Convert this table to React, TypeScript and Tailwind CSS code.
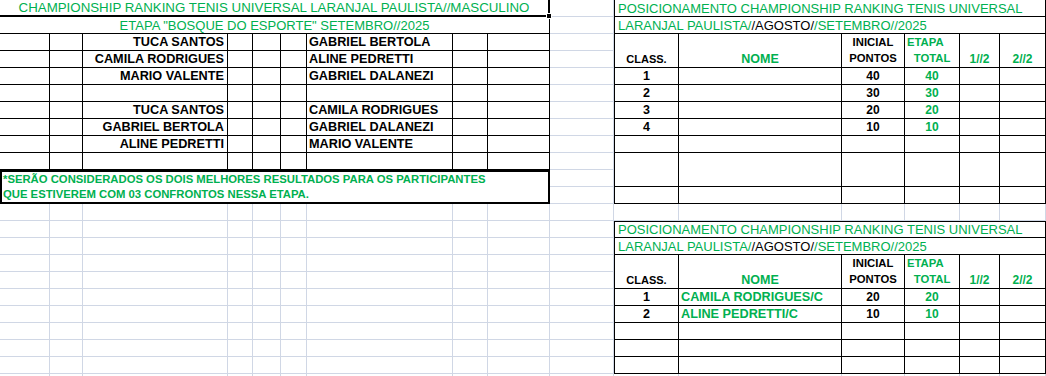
import React from 'react';

const LEFT_COLS = 'grid grid-cols-[50px_33px_145px_25px_28px_26px_146px_35px_62px]';
const RIGHT_COLS = 'grid grid-cols-[65px_163px_63px_55px_40px_46px]';

const matches = [
  ['TUCA SANTOS', 'GABRIEL BERTOLA'],
  ['CAMILA RODRIGUES', 'ALINE PEDRETTI'],
  ['MARIO VALENTE', 'GABRIEL DALANEZI'],
  ['', ''],
  ['TUCA SANTOS', 'CAMILA RODRIGUES'],
  ['GABRIEL BERTOLA', 'GABRIEL DALANEZI'],
  ['ALINE PEDRETTI', 'MARIO VALENTE'],
  ['', ''],
];

type Rank = { pos: string; name: string; pts: string };

const ranking1: Rank[] = [
  { pos: '1', name: '', pts: '40' },
  { pos: '2', name: '', pts: '30' },
  { pos: '3', name: '', pts: '20' },
  { pos: '4', name: '', pts: '10' },
];

const ranking2: Rank[] = [
  { pos: '1', name: 'CAMILA RODRIGUES/C', pts: '20' },
  { pos: '2', name: 'ALINE PEDRETTI/C', pts: '10' },
];

function SheetGrid() {
  // faint excel gridlines behind everything
  return (
    <div className="col-start-1 row-start-1 grid grid-cols-[50px_33px_145px_25px_28px_26px_146px_35px_62px_64px_65px_163px_63px_55px_40px_46px] auto-rows-[17px]">
      {Array.from({ length: 23 * 16 }).map((_, i) => (
        <div key={i} className="border-r border-b border-[#d0d7e5]" />
      ))}
    </div>
  );
}

function MatchRow({ left, right }: { left: string; right: string }) {
  return (
    <div className={`${LEFT_COLS} h-[17px]`}>
      <div className="border-r border-b border-black bg-white" />
      <div className="border-r border-b border-black bg-white" />
      <div className="border-r border-b border-black bg-white flex items-center justify-end pr-[3px] text-[12.7px] font-bold leading-none text-black whitespace-nowrap">
        {left}
      </div>
      <div className="border-r border-b border-black bg-white" />
      <div className="border-r border-b border-black bg-white" />
      <div className="border-r border-b border-black bg-white" />
      <div className="border-r border-b border-black bg-white flex items-center pl-[2px] text-[12.7px] font-bold leading-none text-black whitespace-nowrap">
        {right}
      </div>
      <div className="border-r border-b border-black bg-white" />
      <div className="border-r border-b border-black bg-white" />
    </div>
  );
}

function RCell({
  first,
  className = '',
  children,
}: {
  first?: boolean;
  className?: string;
  children?: React.ReactNode;
}) {
  return (
    <div
      className={`border-r border-b border-black bg-white flex items-center leading-none whitespace-nowrap ${
        first ? 'border-l' : ''
      } ${className}`}
    >
      {children}
    </div>
  );
}

function HeadCell({
  first,
  top,
  bottom,
  topClass = 'justify-center',
  className = '',
}: {
  first?: boolean;
  top?: React.ReactNode;
  bottom?: React.ReactNode;
  topClass?: string;
  className?: string;
}) {
  return (
    <div
      className={`border-r border-b border-black bg-white flex flex-col leading-none whitespace-nowrap font-bold ${
        first ? 'border-l' : ''
      } ${className}`}
    >
      <div className={`h-[17px] flex items-center ${topClass}`}>{top}</div>
      <div className="flex-1 flex items-center justify-center">{bottom}</div>
    </div>
  );
}

function RankingTable({ rows, topBorder }: { rows: Rank[]; topBorder?: boolean }) {
  const empties = rows.length === 4 ? 0 : 3;
  return (
    <div className="flex flex-col">
      <div
        className={`h-[17px] border-l border-r border-b border-black bg-white flex items-center pl-[3px] text-[13px] leading-none text-[#00b050] whitespace-nowrap ${
          topBorder ? 'border-t' : ''
        }`}
      >
        POSICIONAMENTO CHAMPIONSHIP RANKING TENIS UNIVERSAL
      </div>
      <div className="h-[17px] border-l border-r border-b border-black bg-white flex items-center pl-[3px] text-[13px] leading-none text-[#00b050] whitespace-nowrap">
        LARANJAL PAULISTA/<span className="text-black">/AGOSTO/</span>/SETEMBRO//2025
      </div>

      <div className={`${RIGHT_COLS} h-[34px]`}>
        <HeadCell first bottom="CLASS." className="text-[11px] text-black" />
        <HeadCell bottom="NOME" className="text-[12.5px] text-[#00b050]" />
        <HeadCell top="INICIAL" bottom="PONTOS" className="text-[11.3px] text-black" />
        <HeadCell
          top="ETAPA"
          bottom="TOTAL"
          topClass="justify-start pl-[2px]"
          className="text-[11.3px] text-[#00b050]"
        />
        <HeadCell bottom="1//2" className="text-[12px] text-[#00b050]" />
        <HeadCell bottom="2//2" className="text-[12px] text-[#00b050]" />
      </div>

      {rows.map((r) => (
        <div key={r.pos} className={`${RIGHT_COLS} h-[17px]`}>
          <RCell first className="justify-center text-[12.5px] font-bold text-black">
            {r.pos}
          </RCell>
          <RCell className="pl-[2px] text-[12.7px] font-bold text-[#00b050]">{r.name}</RCell>
          <RCell className="justify-center text-[12px] font-bold text-black">{r.pts}</RCell>
          <RCell className="justify-center text-[12px] font-bold text-[#00b050]">{r.pts}</RCell>
          <RCell />
          <RCell />
        </div>
      ))}

      {empties === 0 ? (
        <>
          <div className={`${RIGHT_COLS} h-[17px]`}>
            <RCell first /><RCell /><RCell /><RCell /><RCell /><RCell />
          </div>
          <div className={`${RIGHT_COLS} h-[34px]`}>
            <RCell first /><RCell /><RCell /><RCell /><RCell /><RCell />
          </div>
          <div className={`${RIGHT_COLS} h-[17px]`}>
            <RCell first /><RCell /><RCell /><RCell /><RCell /><RCell />
          </div>
        </>
      ) : (
        [0, 1, 2].map((i) => (
          <div key={i} className={`${RIGHT_COLS} h-[17px]`}>
            <RCell first /><RCell /><RCell /><RCell /><RCell /><RCell />
          </div>
        ))
      )}
    </div>
  );
}

export default function App() {
  return (
    <div className="w-[1046px] h-[376px] overflow-hidden bg-white grid font-['Liberation_Sans',Arial,sans-serif]">
      <SheetGrid />

      <div className="col-start-1 row-start-1 flex items-start">
        {/* left: confrontos da etapa */}
        <div className="w-[550px] flex flex-col">
          <div className="relative h-[17px] border-r-2 border-b-2 border-black bg-white flex items-center justify-center text-[13.3px] leading-none text-[#00b050] whitespace-nowrap">
            CHAMPIONSHIP RANKING TENIS UNIVERSAL LARANJAL PAULISTA//MASCULINO
            <span className="absolute -right-[4px] -bottom-[4px] w-[6px] h-[6px] bg-black border border-white" />
          </div>
          <div className="h-[17px] border-r border-b border-black bg-white flex items-center justify-center text-[13px] leading-none text-[#00b050] whitespace-nowrap">
            ETAPA "BOSQUE DO ESPORTE" SETEMBRO//2025
          </div>

          {matches.map(([l, r], i) => (
            <MatchRow key={i} left={l} right={r} />
          ))}

          <div className="h-[34px] border-2 border-black bg-white flex flex-col text-[11.3px] font-bold leading-none text-[#00b050] whitespace-nowrap">
            <div className="h-[16px] flex items-center pl-[1px]">
              *SERÃO CONSIDERADOS OS DOIS MELHORES RESULTADOS PARA OS PARTICIPANTES
            </div>
            <div className="flex-1 flex items-center pl-[1px]">
              QUE ESTIVEREM COM 03 CONFRONTOS NESSA ETAPA.
            </div>
          </div>
        </div>

        <div className="w-[64px] shrink-0" />

        {/* right: posicionamento */}
        <div className="w-[432px] flex flex-col">
          <RankingTable rows={ranking1} />
          <div className="h-[17px]" />
          <RankingTable rows={ranking2} topBorder />
        </div>
      </div>
    </div>
  );
}
